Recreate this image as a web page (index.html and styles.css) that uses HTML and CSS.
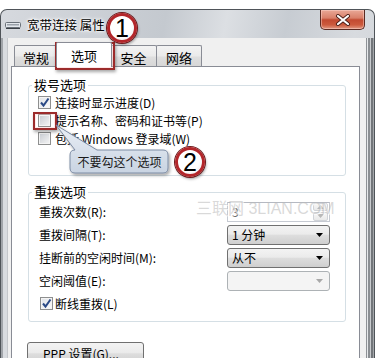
FILE: index.html
```html
<!DOCTYPE html>
<html lang="zh-CN">
<head>
<meta charset="utf-8">
<title>宽带连接 属性</title>
<link rel="stylesheet" href="styles.css">
</head>
<body>
<div class="window">
  <div class="titlebar">
    <svg class="ticon" viewBox="0 0 16 10" width="16" height="10">
      <rect x="0.5" y="2.5" width="15" height="5" rx="1" fill="#e3e7ec" stroke="#6a7179"/>
      <rect x="2" y="4" width="12" height="1.5" fill="#9aa1a9"/>
      <rect x="1" y="8" width="14" height="1" fill="#3b4046"/>
    </svg>
    <span class="title">宽带连接 属性</span>
    <div class="close">
      <svg viewBox="0 0 16 12" width="16" height="12">
        <path d="M3 2 L13 10 M13 2 L3 10" stroke="#4a1f18" stroke-width="4" stroke-linecap="round"/>
        <path d="M3 2 L13 10 M13 2 L3 10" stroke="#ffffff" stroke-width="2.2" stroke-linecap="round"/>
      </svg>
    </div>
  </div>
  <div class="frame">
    <div class="lframe"></div>
    <div class="client">
      <div class="tabs">
        <div class="tab t1">常规</div>
        <div class="tab sel">选项</div>
        <div class="tab t3">安全</div>
        <div class="tab t4">网络</div>
      </div>
      <div class="panel">
        <fieldset class="group g1">
          <legend>拨号选项</legend>
          <div class="gbody">
            <div class="cbrow"><span class="cb on"><svg viewBox="0 0 11 11" width="11" height="11"><path d="M2 5.5 L4.5 8.5 L9.5 1.5" stroke="#2b4a86" stroke-width="2" fill="none"/></svg></span><span>连接时显示进度(D)</span></div>
            <div class="cbrow"><span class="cb"></span><span>提示名称、密码和证书等(P)</span></div>
            <div class="cbrow"><span class="cb"></span><span>包括 Windows 登录域(W)</span></div>
          </div>
        </fieldset>
        <fieldset class="group g2">
          <legend>重拨选项</legend>
          <div class="gbody">
            <div class="frow"><span class="flabel">重拨次数(R):</span><div class="ctl spin"><span class="val">3</span><span class="spinbtns"><span class="sb"><svg viewBox="0 0 7 4" width="7" height="4"><path d="M0 4 L3.5 0 L7 4 Z" fill="#b8b8b8"/></svg></span><span class="sb"><svg viewBox="0 0 7 4" width="7" height="4"><path d="M0 0 L7 0 L3.5 4 Z" fill="#b8b8b8"/></svg></span></span></div></div>
            <div class="frow"><span class="flabel">重拨间隔(T):</span><div class="ctl combo"><span class="val">1 分钟</span><svg class="arrow" viewBox="0 0 7 4" width="7" height="4"><path d="M0 0 L7 0 L3.5 4 Z" fill="#000"/></svg></div></div>
            <div class="frow"><span class="flabel">挂断前的空闲时间(M):</span><div class="ctl combo"><span class="val">从不</span><svg class="arrow" viewBox="0 0 7 4" width="7" height="4"><path d="M0 0 L7 0 L3.5 4 Z" fill="#000"/></svg></div></div>
            <div class="frow"><span class="flabel">空闲阈值(E):</span><div class="ctl combo disabled"><span class="val"></span><svg class="arrow" viewBox="0 0 7 4" width="7" height="4"><path d="M0 0 L7 0 L3.5 4 Z" fill="#a8a8a8"/></svg></div></div>
            <div class="cbrow g2cb"><span class="cb on"><svg viewBox="0 0 11 11" width="11" height="11"><path d="M2 5.5 L4.5 8.5 L9.5 1.5" stroke="#2b4a86" stroke-width="2" fill="none"/></svg></span><span>断线重拨(L)</span></div>
          </div>
        </fieldset>
        <div class="btnrow"><button class="btn">PPP 设置(G)...</button></div>
      </div>
    </div>
    <div class="rframe"></div>
  </div>
</div>

<div class="watermark">三联网 3LIAN.COM</div>
<div class="mark rect1"></div>
<div class="mark rect2"></div>
<svg class="callout" viewBox="0 0 135 65" width="135" height="65">
  <defs>
    <linearGradient id="cg" x1="0" y1="0" x2="0" y2="1">
      <stop offset="0" stop-color="#e9eef5"/>
      <stop offset="1" stop-color="#c9d4e2"/>
    </linearGradient>
    <filter id="sh" x="-20%" y="-20%" width="140%" height="150%">
      <feDropShadow dx="1.5" dy="2" stdDeviation="1.5" flood-color="#000" flood-opacity="0.35"/>
    </filter>
  </defs>
  <path d="M30 35 L11 10 L52 35 L118 35 Q123 35 123 40 L123 53 Q123 58 118 58 L30 58 Q25 58 25 53 L25 40 Q25 35 30 35 Z" fill="url(#cg)" stroke="#7d8ca4" stroke-width="1" filter="url(#sh)"/>
</svg>
<div class="callout-text">不要勾这个选项</div>
<div class="num n1">1</div>
<div class="num n2">2</div>
</body>
</html>
```

FILE: styles.css
```css
* { box-sizing: border-box; }
html, body { margin: 0; padding: 0; }
body {
  width: 385px;
  height: 358px;
  overflow: hidden;
  position: relative;
  background: #ffffff;
  font-family: "Noto Sans CJK SC", "Liberation Sans", sans-serif;
  font-size: 12px;
  color: #000;
}

.window {
  margin-top: 9px;
  width: 375px;
  height: 362px;
  border: 1px solid #4f5459;
  border-bottom: none;
  border-radius: 7px 7px 0 0;
  background: linear-gradient(100deg, #d6d9de 0%, #c4c9cf 38%, #dcdfe3 52%, #c7ccd2 66%, #d8dbdf 82%, #cdd1d6 100%);
  display: flex;
  flex-direction: column;
}

.titlebar {
  height: 28px;
  flex: none;
  display: flex;
  align-items: center;
  padding-left: 4px;
}
.ticon { width: 16px; height: 10px; margin-right: 6px; margin-top: 2px; }
.title {
  font-size: 12.5px;
  line-height: 16px;
  margin-top: 1px;
  text-shadow: 0 0 5px #fff, 0 0 3px #fff, 0 0 2px #fff;
}
.close {
  margin-left: auto;
  margin-right: 9px;
  align-self: flex-start;
  width: 45px;
  height: 20px;
  border: 1px solid #5a2a22;
  border-top: none;
  border-radius: 0 0 5px 5px;
  background: linear-gradient(#e9a897 0%, #d9806a 42%, #c24a31 52%, #cc5a3d 78%, #e29a84 100%);
  box-shadow: inset 0 0 0 1px rgba(255, 220, 210, 0.45);
  display: flex;
  align-items: center;
  justify-content: center;
}

.frame { flex: 1; display: flex; }
.lframe {
  width: 7px;
  flex: none;
  background: linear-gradient(to right, #a1a5aa 0 2px, #d9dce0 2px 6px, #c4c7cb 6px);
}
.rframe {
  width: 8px;
  flex: none;
  background: linear-gradient(to right, #8d9195 0 1px, #e6e8ea 1px 2px, #8a8e92 2px 4px, #c9cccf 4px 5px, #72767a 5px 7px, #a4a7aa 7px);
}
.client {
  flex: 1;
  background: #f0f0f0;
  padding: 4px 6px 0 3px;
  display: flex;
  flex-direction: column;
}

.tabs {
  height: 25px;
  display: flex;
  align-items: flex-end;
  margin-left: 3px;
  margin-bottom: -1px;
}
.tab {
  height: 22px;
  border: 1px solid #898c95;
  border-bottom: none;
  border-radius: 2px 2px 0 0;
  background: linear-gradient(#f3f3f3, #ebebeb 45%, #dedede 55%, #d6d6d6);
  display: flex;
  align-items: center;
  justify-content: center;
  padding-top: 2px;
  font-size: 13px;
}
.t1 { width: 44px; }
.t3 { width: 47px; }
.t4 { width: 46px; margin-left: -1px; }
.tab.sel {
  width: 56px;
  height: 25px;
  margin: 0 -2px;
  padding-top: 0;
  background: #ffffff;
  position: relative;
  z-index: 1;
}

.panel {
  flex: 1;
  background: #ffffff;
  border: 1px solid #898c95;
  border-bottom: none;
  padding: 10px 13px 0 16px;
}

.group {
  margin: 0;
  padding: 0;
  min-width: 0;
  border: 1px solid #d5dfe5;
  border-radius: 3px;
}
.group legend {
  margin-left: 3px;
  padding: 0 2px;
  font-size: 13px;
  line-height: 16px;
}
.g1 .gbody { padding: 0 15px 28px 9px; }
.g2 { margin-top: 8px; }
.g2 .gbody { padding: 0 15px 6px 10px; }

.cbrow {
  height: 18px;
  display: flex;
  align-items: center;
}
.cb {
  width: 13px;
  height: 13px;
  flex: none;
  margin-right: 4px;
  border: 1px solid #8e8f8f;
  background: linear-gradient(135deg, #c6cad0, #f6f6f6);
  box-shadow: inset 0 0 0 1px #f4f4f4;
  display: flex;
  align-items: center;
  justify-content: center;
}
.cb.on { background: linear-gradient(135deg, #dfe2e6, #fbfbfb); }
.g2cb { height: 23px; }
.g2cb .cb { margin-left: 1px; margin-right: 2px; }

.frow {
  height: 23px;
  display: flex;
  align-items: center;
}
.flabel { flex: 1; }
.ctl {
  width: 103px;
  height: 20px;
  flex: none;
  display: flex;
  align-items: center;
}
.val { flex: 1; padding-left: 4px; }
.spin {
  border: 1px solid #c6cad2;
  border-top-color: #b5b9c2;
  background: #fff;
  color: #6a6a6a;
  padding-right: 1px;
}
.spinbtns {
  width: 15px;
  height: 18px;
  display: flex;
  flex-direction: column;
  gap: 1px;
}
.sb {
  flex: 1;
  border: 1px solid #d0d3d8;
  border-radius: 2px;
  background: linear-gradient(#f7f7f7, #e9e9e9);
  display: flex;
  align-items: center;
  justify-content: center;
}
.combo {
  border: 1px solid #707070;
  border-radius: 3px;
  background: linear-gradient(#f3f3f3, #ebebeb 45%, #dddddd 52%, #cfcfcf);
  padding-right: 6px;
}
.combo.disabled {
  border-color: #adb2b5;
  background: #f4f4f4;
}
.arrow { flex: none; }

.btnrow { margin-top: 20px; }
.btn {
  margin-left: -1px;
  width: 117px;
  height: 23px;
  border: 1px solid #707070;
  border-radius: 3px;
  background: linear-gradient(#f3f3f3, #ebebeb 45%, #dddddd 52%, #cfcfcf);
  font-family: "Noto Sans CJK SC", "Liberation Sans", sans-serif;
  font-size: 12px;
  color: #000;
  text-align: left;
  padding: 0 0 0 15px;
}

/* annotations layered over the screenshot */
.watermark {
  position: absolute;
  left: 196px;
  top: 200px;
  font-family: "Liberation Sans", "Noto Sans CJK SC", sans-serif;
  font-size: 16px;
  line-height: 18px;
  color: rgba(185, 185, 185, 0.55);
  text-shadow: 1px 1px 0 rgba(255, 255, 255, 0.7);
  white-space: nowrap;
}
.mark {
  position: absolute;
  border: 2px solid #9c2b2b;
  box-shadow: 1px 2px 3px rgba(0, 0, 0, 0.35), inset 0 0 0 1px rgba(255, 190, 190, 0.35);
}
.rect1 { left: 55px; top: 42px; width: 60px; height: 28px; }
.rect2 { left: 33px; top: 112px; width: 24px; height: 18px; }

.callout {
  position: absolute;
  left: 45px;
  top: 115px;
}
.callout-text {
  position: absolute;
  left: 70px;
  top: 150px;
  width: 99px;
  height: 23px;
  line-height: 23px;
  text-align: center;
  font-size: 12px;
  color: #1a1a1a;
}

.num {
  position: absolute;
  width: 30px;
  height: 30px;
  border-radius: 50%;
  border: 3px solid #b3262a;
  background: radial-gradient(circle at 40% 35%, #ffffff 55%, #e9e9e9);
  box-shadow: 0 0 0 1px #6e1a1c, 1px 2px 3px rgba(0, 0, 0, 0.4);
  font-family: "Liberation Sans", sans-serif;
  font-size: 25px;
  line-height: 24px;
  text-align: center;
  color: #000;
}
.n1 { left: 107px; top: 13px; }
.n2 { left: 175px; top: 147px; }
```
